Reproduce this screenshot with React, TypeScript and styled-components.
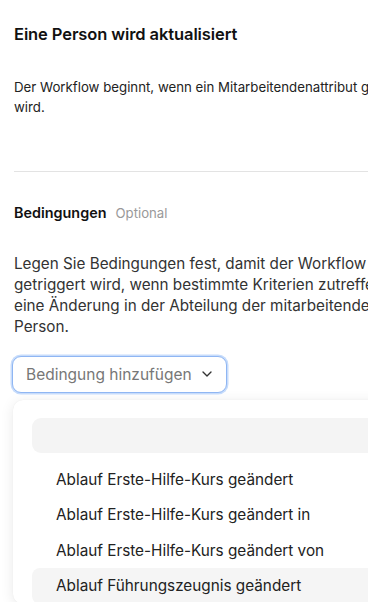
import React from "react";
import styled, { createGlobalStyle } from "styled-components";

const Global = createGlobalStyle`
  html, body { margin: 0; padding: 0; background: #fff; overflow: hidden; }
  body { font-family: Inter, "Noto Sans", sans-serif; color: #1a1a1a; }
`;

const Page = styled.div`
  width: 440px;
  padding: 0 0 0 14px;
  box-sizing: border-box;
`;

const Title = styled.h1`
  margin: 0;
  padding-top: 23px;
  font-size: 16.5px;
  line-height: 22px;
  font-weight: 600;
  letter-spacing: -0.1px;
  color: #111;
`;

const Lead = styled.p`
  margin: 32px 0 0;
  font-size: 13.25px;
  line-height: 20px;
  color: #222;
  width: 410px;
`;

const Divider = styled.hr`
  margin: 54px 0 0;
  border: 0;
  border-top: 1px solid #e3e3e3;
  width: 420px;
`;

const SectionHead = styled.div`
  display: flex;
  align-items: baseline;
  gap: 9px;
  margin-top: 31px;
`;

const SectionTitle = styled.span`
  font-size: 14.4px;
  line-height: 20px;
  font-weight: 600;
  color: #111;
`;

const Muted = styled.span`
  font-size: 13.2px;
  color: #999;
`;

const Body = styled.p`
  margin: 29.5px 0 0;
  font-size: 15.25px;
  line-height: 21.3px;
  color: #333;
  width: 410px;
`;

const Trigger = styled.button`
  margin: 18px 0 0 -2px;
  height: 37px;
  padding: 0 11px 0 13px;
  display: inline-flex;
  align-items: center;
  gap: 7px;
  border: 1px solid #8fb6f3;
  box-shadow: 0 0 0 1.5px #c7dcfb;
  border-radius: 9px;
  background: #fff;
  font-family: inherit;
  font-size: 15.5px;
  color: #777;
`;

const Menu = styled.div`
  margin: 7px 0 0 -1px;
  width: 440px;
  background: #fff;
  border-radius: 10px;
  box-shadow: 0 2px 14px rgba(0, 0, 0, 0.09), 0 0 1px rgba(0, 0, 0, 0.08);
  padding: 18px 0 0 19px;
  box-sizing: border-box;
`;

const Search = styled.div`
  height: 35px;
  border-radius: 9px;
  background: #f4f4f4;
`;

const List = styled.ul`
  list-style: none;
  margin: 9px 0 0;
  padding: 0;
`;

const Item = styled.li<{ $active?: boolean }>`
  height: 35.5px;
  display: flex;
  align-items: center;
  padding-left: 24px;
  border-radius: 8px;
  font-size: 15.3px;
  color: #222;
  background: ${(p) => (p.$active ? "#f5f5f5" : "transparent")};
`;

const Chevron = () => (
  <svg width="16" height="16" viewBox="0 0 24 24" fill="none" stroke="#333" strokeWidth="2" strokeLinecap="round" strokeLinejoin="round">
    <path d="M6 9l6 6 6-6" />
  </svg>
);

export default function App() {
  return (
    <>
      <Global />
      <Page>
        <Title>Eine Person wird aktualisiert</Title>
        <Lead>Der Workflow beginnt, wenn ein Mitarbeitendenattribut geändert wird.</Lead>
        <Divider />
        <SectionHead>
          <SectionTitle>Bedingungen</SectionTitle>
          <Muted>Optional</Muted>
        </SectionHead>
        <Body>
          Legen Sie Bedingungen fest, damit der Workflow nur getriggert wird, wenn bestimmte Kriterien zutreffen, z. B. eine Änderung in der Abteilung der mitarbeitenden Person.
        </Body>
        <Trigger>
          Bedingung hinzufügen
          <Chevron />
        </Trigger>
        <Menu>
          <Search />
          <List>
            <Item>Ablauf Erste-Hilfe-Kurs geändert</Item>
            <Item>Ablauf Erste-Hilfe-Kurs geändert in</Item>
            <Item>Ablauf Erste-Hilfe-Kurs geändert von</Item>
            <Item $active>Ablauf Führungszeugnis geändert</Item>
          </List>
        </Menu>
      </Page>
    </>
  );
}
